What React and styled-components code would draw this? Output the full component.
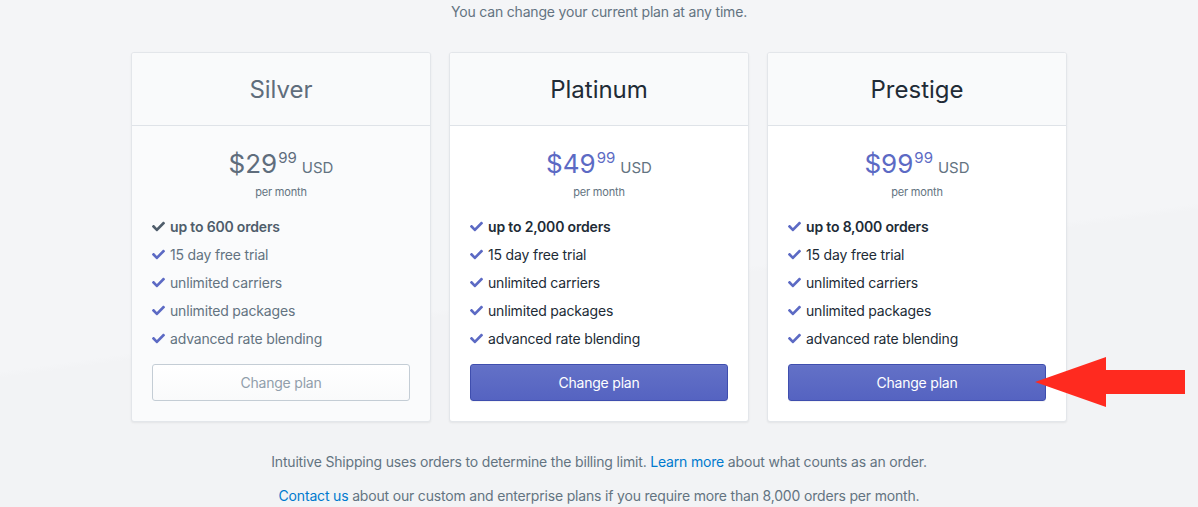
import React from "react";
import styled, { createGlobalStyle } from "styled-components";
import { FaCheck } from "react-icons/fa";

const Global = createGlobalStyle`
  html, body { margin: 0; padding: 0; }
  body {
    font-family: Inter, "Noto Sans", "Liberation Sans", sans-serif;
    background: #f4f5f7;
    color: #212b36;
    -webkit-font-smoothing: antialiased;
  }
`;

const Page = styled.div`
  position: relative;
  width: 1198px;
  height: 507px;
  overflow: hidden;
  letter-spacing: -0.18px;
  background: linear-gradient(172deg, #f4f5f7 0%, #f4f5f7 55%, #f2f3f5 56%, #f2f3f5 100%);
`;

const Intro = styled.p`
  margin: 0;
  padding-top: 3px;
  height: 49px;
  text-align: center;
  font-size: 14px;
  line-height: 18px;
  color: #637381;
`;

const Cards = styled.div`
  display: flex;
  justify-content: center;
  gap: 18px;
`;

const Card = styled.div`
  width: 300px;
  box-sizing: border-box;
  background: ${(p) => (p.$muted ? "#fafbfc" : "#fff")};
  border: 1px solid #e3e6ea;
  border-radius: 3px;
  box-shadow: 0 1px 2px rgba(63, 63, 68, 0.08);
  overflow: hidden;
`;

const Header = styled.div`
  height: 73px;
  box-sizing: border-box;
  padding-top: 1px;
  display: flex;
  align-items: center;
  justify-content: center;
  background: #f9fafb;
  border-bottom: 1px solid #dfe3e8;
`;

const Title = styled.h2`
  margin: 0;
  font-size: 24px;
  font-weight: 400;
  letter-spacing: 0;
  color: ${(p) => (p.$muted ? "#5f6d7c" : "#212b36")};
`;

const Body = styled.div`
  padding: 20px 20px 20px;
`;

const PriceRow = styled.div`
  display: flex;
  justify-content: center;
  align-items: flex-start;
  height: 36px;
  letter-spacing: 0;
`;

const Amount = styled.span`
  font-size: 26px;
  line-height: 36px;
  color: ${(p) => (p.$muted ? "#5f6d7c" : "#5c6ac4")};
`;

const Cents = styled.sup`
  font-size: 15px;
  line-height: 20px;
  vertical-align: top;
  margin-left: 1px;
  margin-top: 2px;
  color: ${(p) => (p.$muted ? "#5f6d7c" : "#5c6ac4")};
`;

const Currency = styled.span`
  font-size: 15px;
  line-height: 20px;
  margin-left: 5px;
  margin-top: 12px;
  color: #637381;
`;

const Period = styled.div`
  text-align: center;
  font-size: 11px;
  line-height: 16px;
  color: #637381;
  margin-top: 2px;
`;

const Features = styled.ul`
  list-style: none;
  margin: 12px 0 0;
  padding: 0;
`;

const Feature = styled.li`
  display: flex;
  align-items: center;
  gap: 5px;
  height: 28px;
  font-size: 14px;
  font-weight: ${(p) => (p.$bold ? 600 : 400)};
  color: ${(p) => (p.$muted ? (p.$bold ? "#4f5d6b" : "#637381") : "#212b36")};
`;

const Check = styled(FaCheck)`
  width: 13px;
  height: 13px;
  flex: none;
  color: ${(p) => p.$tone};
`;

const Button = styled.button`
  display: block;
  width: 100%;
  height: 37px;
  margin-top: 12px;
  border-radius: 3px;
  font-family: inherit;
  font-size: 14px;
  letter-spacing: -0.2px;
  cursor: pointer;
  ${(p) =>
    p.$primary
      ? `
    background: linear-gradient(180deg, #6371c7, #5563c1);
    border: 1px solid #3f4eae;
    color: #fff;
    box-shadow: inset 0 1px 0 0 #6774c8, 0 1px 0 0 rgba(22,29,37,0.05);
  `
      : `
    background: linear-gradient(180deg, #fff, #f9fafb);
    border: 1px solid #c4cdd5;
    color: #919eab;
  `}
`;

const Footer = styled.div`
  margin-top: 31px;
  text-align: center;
  font-size: 14px;
  color: #637381;
`;

const FooterLine = styled.p`
  margin: 0 0 16px;
  line-height: 18px;
`;

const Link = styled.a`
  color: #007ace;
  text-decoration: none;
`;

const Arrow = styled.svg`
  position: absolute;
  left: 1035px;
  top: 356px;
`;

const plans = [
  { name: "Silver", price: "29", orders: "600", muted: true },
  { name: "Platinum", price: "49", orders: "2,000" },
  { name: "Prestige", price: "99", orders: "8,000" },
];

const extras = ["15 day free trial", "unlimited carriers", "unlimited packages", "advanced rate blending"];

export default function App() {
  return (
    <Page>
      <Global />
      <Intro>You can change your current plan at any time.</Intro>
      <Cards>
        {plans.map((p) => (
          <Card key={p.name} $muted={p.muted}>
            <Header>
              <Title $muted={p.muted}>{p.name}</Title>
            </Header>
            <Body>
              <PriceRow>
                <Amount $muted={p.muted}>${p.price}</Amount>
                <Cents $muted={p.muted}>99</Cents>
                <Currency>USD</Currency>
              </PriceRow>
              <Period>per month</Period>
              <Features>
                <Feature $bold $muted={p.muted}>
                  <Check $tone={p.muted ? "#4f5d6b" : "#5c6ac4"} />
                  up to {p.orders} orders
                </Feature>
                {extras.map((e) => (
                  <Feature key={e} $muted={p.muted}>
                    <Check $tone="#5c6ac4" />
                    {e}
                  </Feature>
                ))}
              </Features>
              <Button $primary={!p.muted}>Change plan</Button>
            </Body>
          </Card>
        ))}
      </Cards>
      <Footer>
        <FooterLine>
          Intuitive Shipping uses orders to determine the billing limit. <Link href="#">Learn more</Link> about what counts as an order.
        </FooterLine>
        <FooterLine>
          <Link href="#">Contact us</Link> about our custom and enterprise plans if you require more than 8,000 orders per month.
        </FooterLine>
      </Footer>
      <Arrow width="152" height="52" viewBox="0 0 152 52">
        <polygon points="0,26 71,1 71,14 150,14 150,38 71,38 71,51" fill="#ff2a1f" />
      </Arrow>
    </Page>
  );
}
